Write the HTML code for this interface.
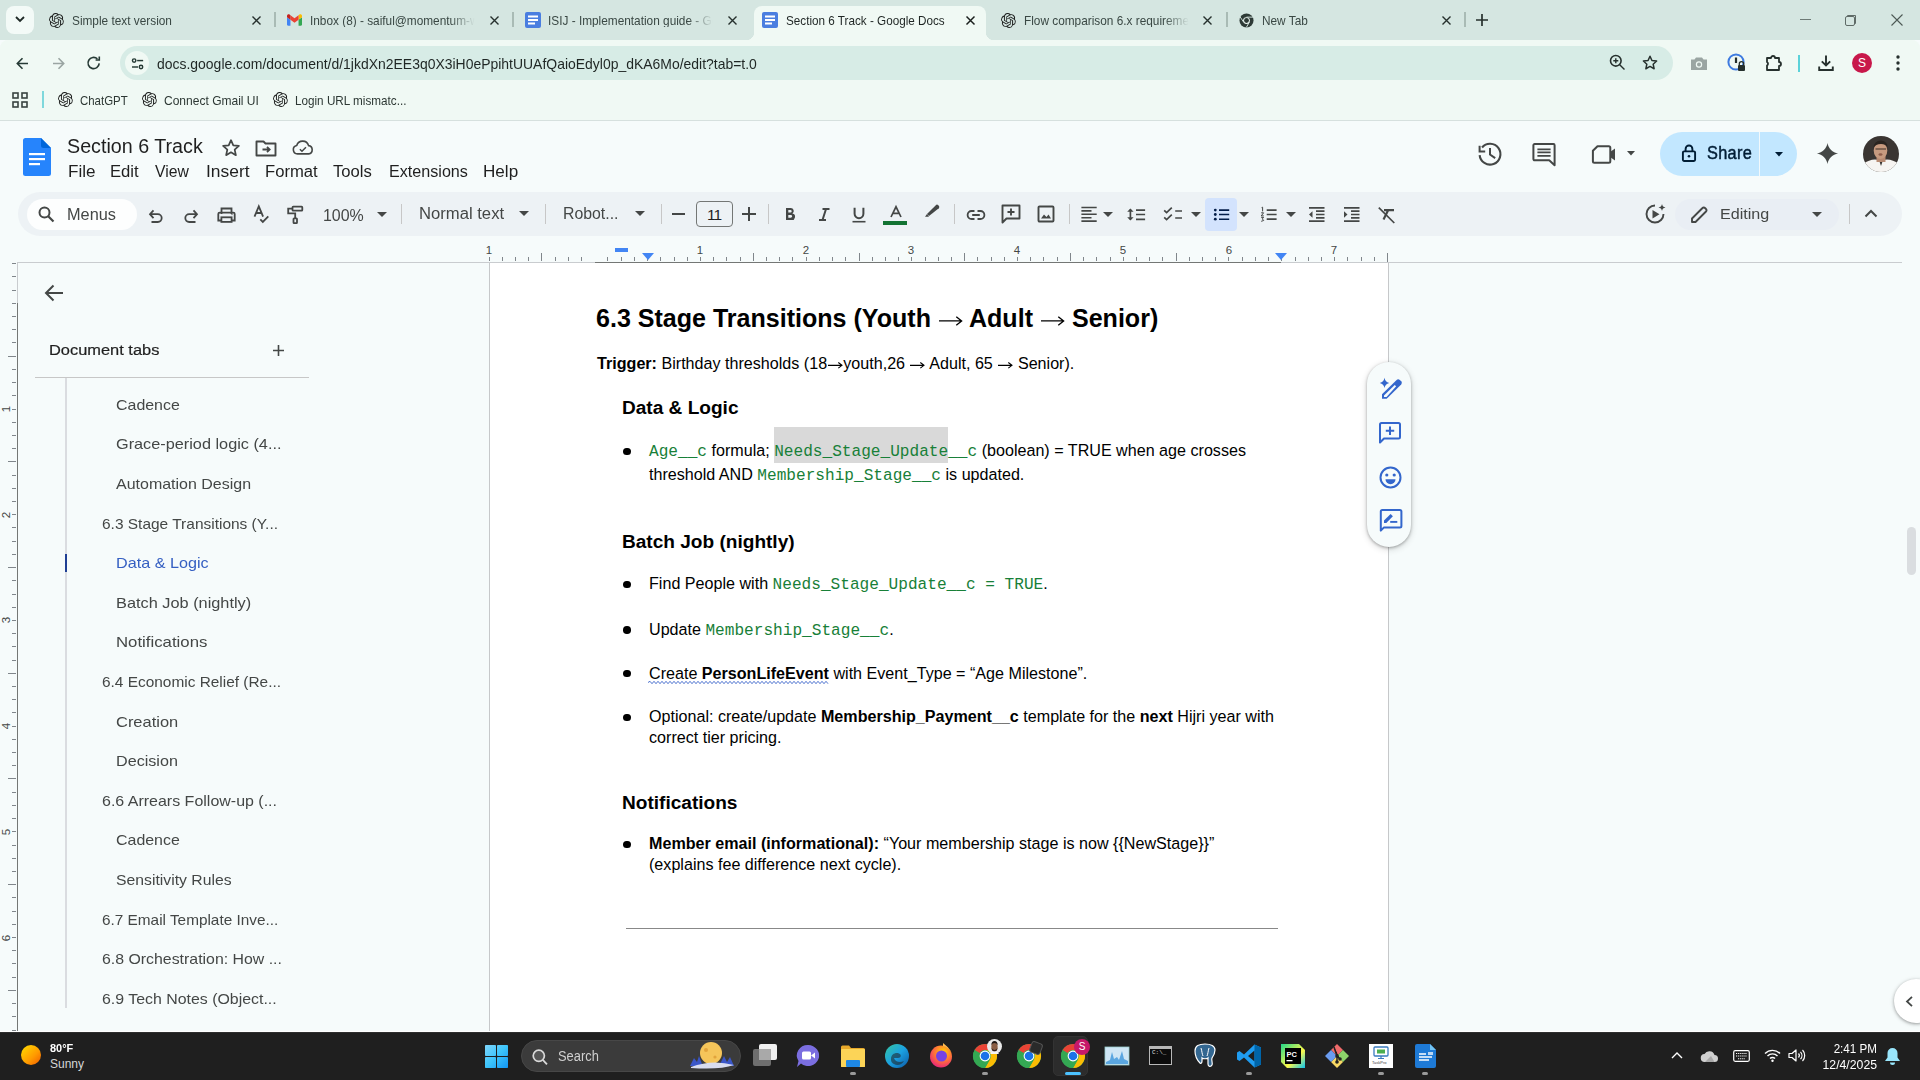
<!DOCTYPE html>
<html><head><meta charset="utf-8">
<style>
*{box-sizing:border-box;margin:0;padding:0}
html,body{width:1920px;height:1080px;overflow:hidden;background:#f6fbfb;font-family:"Liberation Sans",sans-serif;position:relative}
.a{position:absolute}
.t{position:absolute;white-space:nowrap;line-height:1}
svg{position:absolute;overflow:visible}
/* chrome */
#tabstrip{left:0;top:0;width:1920px;height:40px;background:#d5e6e1}
#toolbar{left:0;top:40px;width:1920px;height:80px;background:#f0f9f4;border-radius:8px 8px 0 0}
.tabtxt{font-size:13px;color:#3a4844;top:14px}
.close{font-size:14px;color:#26302d}
.sep{width:2px;height:18px;background:#a9bbb5;top:11px}
#docbg{left:0;top:121px;width:1920px;height:911px;background:#f6fbfb}
.menu{font-size:15.8px;color:#1f1f1f;top:163.5px;transform-origin:0 0}
.tbi{stroke:#444746;fill:none;stroke-width:2}
.tsep{width:1px;height:20px;background:#c7c7c7;top:204px}
.side{font-size:14.3px;color:#444746;transform-origin:0 0}
.doc{color:#000;font-size:15.5px}
.code{font-family:"Liberation Mono",monospace;color:#188038}
#taskbar{left:0;top:1032px;width:1920px;height:48px;background:#1f1f1f;border-top:1px solid #2e2e2e}
</style></head><body>
<svg width="0" height="0" style="position:absolute"><defs><path id="oai" fill="#1d1f1e" d="M22.2819 9.8211a5.9847 5.9847 0 0 0-.5157-4.9108 6.0462 6.0462 0 0 0-6.5098-2.9A6.0651 6.0651 0 0 0 4.9807 4.1818a5.9847 5.9847 0 0 0-3.9977 2.9 6.0462 6.0462 0 0 0 .7427 7.0966 5.98 5.98 0 0 0 .511 4.9107 6.051 6.051 0 0 0 6.5146 2.9001A5.9847 5.9847 0 0 0 13.2599 24a6.0557 6.0557 0 0 0 5.7718-4.2058 5.9894 5.9894 0 0 0 3.9977-2.9001 6.0557 6.0557 0 0 0-.7475-7.0729zm-9.022 12.6081a4.4755 4.4755 0 0 1-2.8764-1.0408l.1419-.0804 4.7783-2.7582a.7948.7948 0 0 0 .3927-.6813v-6.7369l2.02 1.1686a.071.071 0 0 1 .038.052v5.5826a4.504 4.504 0 0 1-4.4945 4.4944zm-9.6607-4.1254a4.4708 4.4708 0 0 1-.5346-3.0137l.142.0852 4.783 2.7582a.7712.7712 0 0 0 .7806 0l5.8428-3.3685v2.3324a.0804.0804 0 0 1-.0332.0615L9.74 19.9502a4.4992 4.4992 0 0 1-6.1408-1.6464zM2.3408 7.8956a4.485 4.485 0 0 1 2.3655-1.9728V11.6a.7664.7664 0 0 0 .3879.6765l5.8144 3.3543-2.0201 1.1685a.0757.0757 0 0 1-.071 0l-4.8303-2.7865A4.504 4.504 0 0 1 2.3408 7.872zm16.5963 3.8558L13.1038 8.364 15.1192 7.2a.0757.0757 0 0 1 .071 0l4.8303 2.7913a4.4944 4.4944 0 0 1-.6765 8.1042v-5.6772a.79.79 0 0 0-.407-.667zm2.0107-3.0231l-.142-.0852-4.7735-2.7818a.7759.7759 0 0 0-.7854 0L9.409 9.2297V6.8974a.0662.0662 0 0 1 .0284-.0615l4.8303-2.7866a4.4992 4.4992 0 0 1 6.6802 4.66zM8.3065 12.863l-2.02-1.1638a.0804.0804 0 0 1-.038-.0567V6.0742a4.4992 4.4992 0 0 1 7.3757-3.4537l-.142.0805L8.704 5.459a.7948.7948 0 0 0-.3927.6813zm1.0976-2.3654l2.602-1.4998 2.6069 1.4998v2.9994l-2.5974 1.4997-2.6067-1.4997Z"/></defs></svg>
<div id="tabstrip" class="a"></div>
<div id="toolbar" class="a"></div>
<!-- tab dropdown -->
<div class="a" style="left:6px;top:6px;width:28px;height:28px;border-radius:8px;background:#f3faf7"></div>
<svg style="left:14px;top:15px" width="12" height="8"><path d="M2 2 L6 6 L10 2" stroke="#1f2a27" stroke-width="1.8" fill="none"/></svg>
<!-- active tab -->
<div class="a" style="left:754px;top:6px;width:232px;height:34px;background:#f0f9f4;border-radius:8px 8px 0 0"></div>
<div class="a" style="left:746px;top:32px;width:8px;height:8px;background:radial-gradient(circle at 0 0,#d5e6e1 8px,#f0f9f4 8.5px)"></div>
<div class="a" style="left:986px;top:32px;width:8px;height:8px;background:radial-gradient(circle at 8px 0,#d5e6e1 8px,#f0f9f4 8.5px)"></div>
<!-- tab icons -->
<svg style="left:49px;top:13px" width="15" height="15" viewBox="0 0 24 24"><use href="#oai"/></svg>
<svg style="left:287px;top:14px" width="15" height="12" viewBox="0 0 20 15"><path d="M1.4 15h3.2V7.2L0 3.8v9.8C0 14.4.6 15 1.4 15z" fill="#4285f4"/><path d="M15.4 15h3.2c.8 0 1.4-.6 1.4-1.4V3.8l-4.6 3.4z" fill="#34a853"/><path d="M15.4 1.3v5.9L20 3.8V2c0-1.7-2-2.7-3.4-1.7z" fill="#fbbc04"/><path d="M4.6 7.2V1.3L10 5.3l5.4-4v5.9L10 11.2z" fill="#ea4335"/><path d="M0 2v1.8l4.6 3.4V1.3L3.4.3C2 -.7 0 .3 0 2z" fill="#c5221f"/></svg>
<svg style="left:525px;top:12px" width="16" height="16" viewBox="0 0 16 16"><rect x="0" y="0" width="16" height="16" rx="2" fill="#4a7ee0"/><rect x="3" y="3.5" width="10" height="2" fill="#fff"/><rect x="3" y="7" width="10" height="2" fill="#fff"/><rect x="3" y="10.5" width="7" height="2" fill="#fff"/></svg>
<svg style="left:762px;top:12px" width="16" height="16" viewBox="0 0 16 16"><rect x="0" y="0" width="16" height="16" rx="2" fill="#4a7ee0"/><rect x="3" y="3.5" width="10" height="2" fill="#fff"/><rect x="3" y="7" width="10" height="2" fill="#fff"/><rect x="3" y="10.5" width="7" height="2" fill="#fff"/></svg>
<svg style="left:1001px;top:13px" width="15" height="15" viewBox="0 0 24 24"><use href="#oai"/></svg>
<svg style="left:1239px;top:13px" width="15" height="15" viewBox="0 0 16 16"><circle cx="8" cy="8" r="7.5" fill="#2e3a36"/><circle cx="8" cy="8" r="3.6" fill="#f0f9f4"/><circle cx="8" cy="8" r="2.6" fill="#2e3a36"/><path d="M8 4.4H15M5 9.8L1.2 4.2M11 9.8L7.8 15.4" stroke="#d5e6e1" stroke-width="1"/></svg>
<!-- tab texts -->
<div class="t tabtxt" style="left:72px;transform:scaleX(.91);transform-origin:0 0">Simple text version</div>
<div class="t tabtxt" style="left:310px;width:181px;overflow:hidden;transform:scaleX(.91);transform-origin:0 0;-webkit-mask-image:linear-gradient(90deg,#000 85%,transparent)">Inbox (8) - saiful@momentum-w</div>
<div class="t tabtxt" style="left:548px;width:181px;overflow:hidden;transform:scaleX(.91);transform-origin:0 0;-webkit-mask-image:linear-gradient(90deg,#000 85%,transparent)">ISIJ - Implementation guide - Go</div>
<div class="t tabtxt" style="left:786px;color:#1f2624;transform:scaleX(.9);transform-origin:0 0">Section 6 Track - Google Docs</div>
<div class="t tabtxt" style="left:1024px;width:181px;overflow:hidden;transform:scaleX(.91);transform-origin:0 0;-webkit-mask-image:linear-gradient(90deg,#000 85%,transparent)">Flow comparison 6.x requirements</div>
<div class="t tabtxt" style="left:1262px;transform:scaleX(.91);transform-origin:0 0">New Tab</div>
<!-- close x -->
<svg style="left:252px;top:16px" width="9" height="9"><path d="M.5 .5L8.5 8.5M8.5 .5L.5 8.5" stroke="#26302d" stroke-width="1.4"/></svg>
<svg style="left:490px;top:16px" width="9" height="9"><path d="M.5 .5L8.5 8.5M8.5 .5L.5 8.5" stroke="#26302d" stroke-width="1.4"/></svg>
<svg style="left:728px;top:16px" width="9" height="9"><path d="M.5 .5L8.5 8.5M8.5 .5L.5 8.5" stroke="#26302d" stroke-width="1.4"/></svg>
<svg style="left:966px;top:16px" width="9" height="9"><path d="M.5 .5L8.5 8.5M8.5 .5L.5 8.5" stroke="#1a1f1d" stroke-width="1.45"/></svg>
<svg style="left:1203px;top:16px" width="9" height="9"><path d="M.5 .5L8.5 8.5M8.5 .5L.5 8.5" stroke="#26302d" stroke-width="1.4"/></svg>
<svg style="left:1442px;top:16px" width="9" height="9"><path d="M.5 .5L8.5 8.5M8.5 .5L.5 8.5" stroke="#26302d" stroke-width="1.4"/></svg>
<div class="a sep" style="left:274px;width:1.5px;top:12px;height:15px"></div>
<div class="a sep" style="left:512px;width:1.5px;top:12px;height:15px"></div>
<div class="a sep" style="left:1226px;width:1.5px;top:12px;height:15px"></div>
<div class="a sep" style="left:1464px;width:1.5px;top:12px;height:15px"></div>
<svg style="left:1476px;top:14px" width="12" height="12"><path d="M6 0V12M0 6H12" stroke="#26302d" stroke-width="1.7"/></svg>
<!-- window controls -->
<div class="a" style="left:1800px;top:19px;width:11px;height:1px;background:#6d7a76"></div>
<svg style="left:1845px;top:14px" width="12" height="12"><path d="M2.5 2.5V1.5H10.5V9.5H9.5" stroke="#5f6b67" fill="none" stroke-width="1"/><rect x=".5" y="2.5" width="9" height="9" rx="1.5" stroke="#5f6b67" fill="none" stroke-width="1"/></svg>
<svg style="left:1891px;top:14px" width="12" height="12"><path d="M.5 .5L11.5 11.5M11.5 .5L.5 11.5" stroke="#4d5955" stroke-width="1.1"/></svg>
<!-- toolbar -->
<svg style="left:16px;top:56.5px" width="13" height="13" viewBox="0 0 13 13"><path d="M12 6.5H1.5M6.5 1.2L1.3 6.5 6.5 11.8" stroke="#263a35" stroke-width="1.6" fill="none"/></svg>
<svg style="left:51.5px;top:56.5px" width="13" height="13" viewBox="0 0 13 13"><path d="M1 6.5H11.5M6.5 1.2L11.7 6.5 6.5 11.8" stroke="#9aa5a2" stroke-width="1.6" fill="none"/></svg>
<svg style="left:87px;top:56px" width="14" height="14" viewBox="0 0 14 14"><path d="M12.2 7.4A5.6 5.6 0 1 1 10.4 2.9" stroke="#263a35" stroke-width="1.6" fill="none"/><path d="M8.6 2.8H12.3V-.6" stroke="#263a35" stroke-width="1.6" fill="none" transform="translate(0 1.2)"/></svg>
<div class="a" style="left:120px;top:46px;width:1553px;height:34px;border-radius:17px;background:#d7ece6"></div>
<div class="a" style="left:125px;top:51px;width:24px;height:24px;border-radius:12px;background:#f0f9f4"></div>
<svg style="left:130.5px;top:57.5px" width="14" height="12" viewBox="0 0 16 14"><g stroke="#263a35" stroke-width="1.7" fill="none"><circle cx="3.5" cy="3" r="2"/><path d="M7 3H14"/><circle cx="11.5" cy="10.5" r="2"/><path d="M1 10.5H8"/></g></svg>
<div class="t" style="left:157px;top:56px;font-size:15px;color:#1f2624;transform:scaleX(.93);transform-origin:0 0">docs.google.com/document/d/1jkdXn2EE3q0X3iH0ePpihtUUAfQaioEdyl0p_dKA6Mo/edit?tab=t.0</div>
<svg style="left:1609px;top:54px" width="18" height="18"><circle cx="6.8" cy="6.8" r="5.3" stroke="#26302d" stroke-width="1.6" fill="none"/><path d="M10.7 10.7L15.5 15.5M4.3 6.8H9.3M6.8 4.3V9.3" stroke="#26302d" stroke-width="1.4"/></svg>
<svg style="left:1641px;top:54px" width="18" height="18" viewBox="0 0 24 24"><path d="M12 3l2.6 5.7 6.2.7-4.6 4.2 1.3 6.1L12 16.6l-5.5 3.1 1.3-6.1-4.6-4.2 6.2-.7z" stroke="#26302d" stroke-width="2" fill="none" stroke-linejoin="round"/></svg>
<svg style="left:1690px;top:55px" width="18" height="16" viewBox="0 0 18 16"><path d="M1 4.5h3.5L6 2.5h6l1.5 2H17V15H1z" fill="#9aa5a2"/><circle cx="9" cy="9.5" r="3.2" fill="#f0f9f4"/><circle cx="9" cy="9.5" r="2" fill="#9aa5a2"/></svg>
<svg style="left:1727px;top:53px" width="20" height="20" viewBox="0 0 20 20"><circle cx="9" cy="9" r="7.6" fill="none" stroke="#3e7be0" stroke-width="2"/><path d="M9 4.5V10" stroke="#26302d" stroke-width="2.2"/><rect x="11" y="12" width="7" height="6" rx="1" fill="#26302d"/><path d="M12.3 12V10.8a2.2 2.2 0 0 1 4.4 0V12" stroke="#26302d" stroke-width="1.3" fill="none"/></svg>
<svg style="left:1764px;top:53px" width="20" height="20" viewBox="0 0 20 20"><path d="M3 5h4a2 2 0 0 1 4 0h4v4a2 2 0 0 1 0 4v4H3v-4.5a2 2 0 0 0 0-3.5z" stroke="#26302d" stroke-width="1.8" fill="none" stroke-linejoin="round"/></svg>
<div class="a" style="left:1798px;top:55px;width:2px;height:17px;background:#5bd2d9"></div>
<svg style="left:1816px;top:53px" width="20" height="20"><path d="M10 2.5V12.5M5.8 8.3L10 12.5l4.2-4.2M3.2 13.5V17H16.8V13.5" stroke="#26302d" stroke-width="1.9" fill="none"/></svg>
<div class="a" style="left:1852px;top:53px;width:20px;height:20px;border-radius:10px;background:#c8184a;color:#fff;font-size:12px;line-height:20px;text-align:center">S</div>
<svg style="left:1895px;top:54px" width="6" height="18"><circle cx="3" cy="3" r="1.7" fill="#26302d"/><circle cx="3" cy="9" r="1.7" fill="#26302d"/><circle cx="3" cy="15" r="1.7" fill="#26302d"/></svg>
<!-- bookmarks -->
<svg style="left:12px;top:92px" width="16" height="16"><g fill="none" stroke="#3a4441" stroke-width="1.6"><rect x="1" y="1" width="5" height="5"/><rect x="10" y="1" width="5" height="5"/><rect x="1" y="10" width="5" height="5"/><rect x="10" y="10" width="5" height="5"/></g></svg>
<div class="a" style="left:42px;top:91px;width:2px;height:17px;background:#7fd8dc"></div>
<svg style="left:58px;top:92px" width="15" height="15" viewBox="0 0 24 24"><use href="#oai"/></svg>
<svg style="left:142px;top:92px" width="15" height="15" viewBox="0 0 24 24"><use href="#oai"/></svg>
<svg style="left:273px;top:92px" width="15" height="15" viewBox="0 0 24 24"><use href="#oai"/></svg>
<div class="t" style="left:80px;top:94px;font-size:13px;color:#2d3834;transform:scaleX(.88);transform-origin:0 0">ChatGPT</div>
<div class="t" style="left:164px;top:94px;font-size:13px;color:#2d3834;transform:scaleX(.925);transform-origin:0 0">Connect Gmail UI</div>
<div class="t" style="left:295px;top:94px;font-size:13px;color:#2d3834;transform:scaleX(.9);transform-origin:0 0">Login URL mismatc...</div>
<div class="a" style="left:0;top:120px;width:1920px;height:1px;background:#d6e0de"></div>
<div id="docbg" class="a"></div>

<!-- DOCS HEADER -->
<svg style="left:23px;top:138px" width="28" height="38" viewBox="0 0 28 38"><path d="M2.5 0H18L28 10V35.5A2.5 2.5 0 0 1 25.5 38H2.5A2.5 2.5 0 0 1 0 35.5V2.5A2.5 2.5 0 0 1 2.5 0z" fill="#2684fc"/><path d="M18 0L28 10H20.5A2.5 2.5 0 0 1 18 7.5z" fill="#0066da"/><rect x="6" y="15" width="16" height="2.2" fill="#fff"/><rect x="6" y="20" width="16" height="2.2" fill="#fff"/><rect x="6" y="25" width="11" height="2.2" fill="#fff"/></svg>
<div class="t" style="left:66.5px;top:137px;font-size:19.5px;color:#1f1f1f;transform:scaleX(1.01);transform-origin:0 0">Section 6 Track</div>
<svg style="left:220px;top:137px" width="22" height="22" viewBox="0 0 24 24"><path d="M12 3.5l2.5 5.6 6.1.6-4.6 4.1 1.3 6-5.3-3.1-5.3 3.1 1.3-6-4.6-4.1 6.1-.6z" stroke="#444746" stroke-width="1.9" fill="none" stroke-linejoin="round"/></svg>
<svg style="left:255px;top:138px" width="22" height="20" viewBox="0 0 22 20"><path d="M1.5 3.5V17.5H20.5V5.5H10.5L8.5 3.5z" stroke="#444746" stroke-width="1.9" fill="none" stroke-linejoin="round"/><path d="M7.5 11.5H14.5M12 8.8L14.7 11.5 12 14.2" stroke="#444746" stroke-width="1.8" fill="none"/></svg>
<svg style="left:292px;top:138.5px" width="22" height="17" viewBox="0 0 26 20"><path d="M6.5 17.5A5 5 0 0 1 5.6 7.6 7.3 7.3 0 0 1 19.6 7.8 4.9 4.9 0 0 1 19.7 17.5z" stroke="#444746" stroke-width="1.9" fill="none" stroke-linejoin="round"/><path d="M9.3 12L11.8 14.4 16.5 9.7" stroke="#444746" stroke-width="1.8" fill="none"/></svg>
<div class="t menu" style="left:67.5px;transform:scaleX(1.083)">File</div>
<div class="t menu" style="left:109.5px;transform:scaleX(1.054)">Edit</div>
<div class="t menu" style="left:154.5px;transform:scaleX(0.997)">View</div>
<div class="t menu" style="left:205.5px;transform:scaleX(1.102)">Insert</div>
<div class="t menu" style="left:264.5px;transform:scaleX(1.054)">Format</div>
<div class="t menu" style="left:332.5px;transform:scaleX(1.054)">Tools</div>
<div class="t menu" style="left:388.5px;transform:scaleX(1.021)">Extensions</div>
<div class="t menu" style="left:482.5px;transform:scaleX(1.083)">Help</div>
<!-- right header -->
<svg style="left:1477px;top:141px" width="26" height="26" viewBox="0 0 26 26"><path d="M5.03 6.51A10.4 10.4 0 1 1 2.64 14.1" stroke="#444746" stroke-width="2.1" fill="none"/><path d="M2.6 4.8V10.4H8.2" stroke="#444746" stroke-width="2" fill="none"/><path d="M13 7V13.5L18.2 17.1" stroke="#444746" stroke-width="2" fill="none"/></svg>
<svg style="left:1532px;top:143px" width="24" height="24" viewBox="0 0 24 24"><path d="M2.6 1H21.4A1.2 1.2 0 0 1 22.6 2.2V22.2L17.2 17.3H2.6A1.2 1.2 0 0 1 1.4 16.1V2.2A1.2 1.2 0 0 1 2.6 1z" stroke="#444746" stroke-width="2" fill="none" stroke-linejoin="round"/><path d="M5.4 6.3H18.6M5.4 9.4H18.6M5.4 12.8H18.6" stroke="#444746" stroke-width="1.7"/></svg>
<svg style="left:1592px;top:145px" width="24" height="19" viewBox="0 0 24 19"><path d="M5.5 1.2H16.8A1.5 1.5 0 0 1 18.3 2.7V16.3A1.5 1.5 0 0 1 16.8 17.8H2.4A1.5 1.5 0 0 1 .9 16.3V5.8z" stroke="#444746" stroke-width="2" fill="none" stroke-linejoin="round"/><path d="M18 7L23 3.6V15.4L18 12z" fill="#444746"/></svg>
<svg style="left:1627px;top:151px" width="8" height="4.5"><path d="M0 0H8L4 4.5z" fill="#444746"/></svg>
<div class="a" style="left:1660px;top:132px;width:137px;height:44px;border-radius:22px;background:#c2e7ff"></div>
<div class="a" style="left:1759px;top:132px;width:1px;height:44px;background:#f2f9fc"></div>
<svg style="left:1681px;top:144px" width="16" height="18" viewBox="0 0 16 18"><rect x="1.9" y="7.4" width="12.2" height="9.6" rx="1.2" stroke="#001d35" stroke-width="1.9" fill="none"/><path d="M4.6 7.4V4.9a3.4 3.4 0 0 1 6.8 0V7.4" stroke="#001d35" stroke-width="1.9" fill="none"/><circle cx="8" cy="12.2" r="1.3" fill="#001d35"/></svg>
<div class="t" style="left:1707px;top:145.3px;font-size:17.6px;color:#001d35;-webkit-text-stroke:.45px #001d35;transform:scaleX(.93);transform-origin:0 0;letter-spacing:.3px">Share</div>
<svg style="left:1775px;top:151.5px" width="8" height="4.5"><path d="M0 0H8L4 4.5z" fill="#001d35"/></svg>
<svg style="left:1816px;top:142px" width="23" height="23" viewBox="0 0 24 24"><path d="M12 1C12.9 6.6 17.4 11.1 23 12 17.4 12.9 12.9 17.4 12 23 11.1 17.4 6.6 12.9 1 12 6.6 11.1 11.1 6.6 12 1z" fill="#444746"/></svg>
<svg style="left:1863px;top:136px" width="36" height="36" viewBox="0 0 36 36"><defs><clipPath id="avc"><circle cx="18" cy="18" r="18"/></clipPath></defs><g clip-path="url(#avc)"><rect width="36" height="36" fill="#3a3532"/><path d="M0 28Q8 22 16 24L18 30 20 24Q28 22 36 28V36H0z" fill="#f6f4f1"/><rect x="13.5" y="18" width="9" height="8" fill="#b78a72"/><ellipse cx="17.5" cy="14.5" rx="6.8" ry="8.5" fill="#c79a7f"/><path d="M10.5 12Q11 4.5 18 4.5 25 5 24.5 12 23 8 18 8 12.5 8 10.5 12z" fill="#2a2420"/><path d="M12.5 13H23" stroke="#3d2e26" stroke-width="1.2"/><ellipse cx="17.5" cy="18.5" rx="2" ry="1.3" fill="#8f5d4a"/></g></svg>
<!-- TOOLBAR PILL -->
<div class="a" style="left:18px;top:192px;width:1884px;height:44px;border-radius:22px;background:#edf2f5"></div>
<div class="a" style="left:27px;top:199px;width:110px;height:31px;border-radius:16px;background:#fdfefe"></div>
<svg style="left:38px;top:206px" width="17" height="17" viewBox="0 0 17 17"><circle cx="6.5" cy="6.5" r="5" stroke="#444746" stroke-width="2" fill="none"/><path d="M10.2 10.2L15.5 15.5" stroke="#444746" stroke-width="2.2"/></svg>
<div class="t" style="left:66.5px;top:206.5px;font-size:16px;color:#444746;transform:scaleX(1.02);transform-origin:0 0">Menus</div>
<svg style="left:140px;top:198px" width="170" height="34" viewBox="0 0 170 34"><g stroke="#444746" stroke-width="1.8" fill="none">
<path d="M13.5 12.3L10 16.2 13.5 20.1M10.5 16.2H17.8A3.9 3.9 0 0 1 17.8 24H11.5"/>
<path d="M53.5 12.3L57 16.2 53.5 20.1M56.5 16.2H49.2A3.9 3.9 0 0 0 49.2 24H55.5"/>
<path d="M81.5 16V10.5H91.5V16M81 22.5H78.3V16A1.4 1.4 0 0 1 79.7 14.6H93.3A1.4 1.4 0 0 1 94.7 16V22.5H92"/>
<rect x="81.4" y="19.3" width="10.2" height="4.6"/>
<path d="M114.5 18.6L118.8 8.4 123.1 18.6M116 15H121.6"/>
<path d="M120.3 21.4L122.8 23.9 128.3 18.3"/>
<rect x="152.5" y="8.7" width="9.8" height="3.9" rx=".7"/>
<path d="M152.5 10.7H148.2V15.3H155.2V20.5"/>
<rect x="153.5" y="20.3" width="3.5" height="4.8" rx=".6"/>
</g><circle cx="92" cy="16.6" r=".6" fill="#444746"/></svg>
<div class="t" style="left:323px;top:207.3px;font-size:16.3px;color:#444746;transform:scaleX(.98);transform-origin:0 0">100%</div>
<svg style="left:377px;top:212px" width="10" height="5"><path d="M0 0H10L5 5z" fill="#444746"/></svg>
<div class="a tsep" style="left:401px"></div>
<div class="t" style="left:418.5px;top:205.5px;font-size:16px;color:#444746;transform:scaleX(1.04);transform-origin:0 0">Normal text</div>
<svg style="left:519px;top:211px" width="10" height="5"><path d="M0 0H10L5 5z" fill="#444746"/></svg>
<div class="a tsep" style="left:545px"></div>
<div class="t" style="left:562.5px;top:205.5px;font-size:16px;color:#444746;transform:scaleX(.99);transform-origin:0 0">Robot...</div>
<svg style="left:635px;top:211px" width="10" height="5"><path d="M0 0H10L5 5z" fill="#444746"/></svg>
<div class="a tsep" style="left:661px"></div>
<div class="a" style="left:672px;top:213px;width:13px;height:2px;background:#444746"></div>
<div class="a" style="left:696px;top:201px;width:37px;height:26px;border:1px solid #747775;border-radius:4px"></div>
<div class="t" style="left:707px;top:207px;font-size:15.5px;color:#1f1f1f;letter-spacing:-1px">11</div>
<svg style="left:742px;top:207px" width="14" height="14"><path d="M7 0V14M0 7H14" stroke="#444746" stroke-width="2"/></svg>
<div class="a tsep" style="left:768px"></div>
<svg style="left:785px;top:208px" width="10" height="12" viewBox="0 0 10 12"><path d="M1 0H5.6A3 3 0 0 1 7.4 5.5 3.2 3.2 0 0 1 6 12H1z" fill="#444746"/><path d="M3.3 2H5.4A1.2 1.2 0 0 1 5.4 4.6H3.3zM3.3 6.9H5.7A1.4 1.4 0 0 1 5.7 9.8H3.3z" fill="#edf2f5"/></svg>
<svg style="left:818px;top:208px" width="12" height="13" viewBox="0 0 12 13"><path d="M4.5 1H11.5M1 12H8M8 1L4.5 12" stroke="#444746" stroke-width="2" fill="none"/></svg>
<svg style="left:852px;top:207px" width="14" height="16" viewBox="0 0 14 16"><path d="M2.6 .8V6.8A4.4 4.4 0 0 0 11.4 6.8V.8" stroke="#444746" stroke-width="2" fill="none"/><path d="M.5 14.7H13.5" stroke="#444746" stroke-width="1.6"/></svg>
<svg style="left:890px;top:206px" width="12" height="12" viewBox="0 0 12 12"><path d="M1 11L6 .8 11 11M2.8 7.4H9.2" stroke="#444746" stroke-width="1.7" fill="none"/></svg>
<div class="a" style="left:883px;top:221px;width:24px;height:4px;background:#137333"></div>
<svg style="left:924px;top:203px" width="17" height="15" viewBox="0 0 17 15"><path d="M5 13L3 11 11.8 2.2A1.7 1.7 0 0 1 14.2 2.2L14.8 2.8A1.7 1.7 0 0 1 14.8 5.2z" fill="#444746"/><path d="M3 11L1 13.8H5z" fill="#444746"/></svg>
<div class="a tsep" style="left:954px"></div>
<svg style="left:967px;top:210px" width="18" height="10" viewBox="0 0 18 10"><path d="M7.5 1H4.6A4 4 0 0 0 4.6 9H7.5M10.5 1H13.4A4 4 0 0 1 13.4 9H10.5M5.2 5H12.8" stroke="#444746" stroke-width="1.8" fill="none"/></svg>
<svg style="left:1001px;top:204px" width="20" height="20" viewBox="0 0 20 20"><path d="M1.5 1.5H18.5V14.5H5.5L1.5 18.5z" stroke="#444746" stroke-width="1.9" fill="none" stroke-linejoin="round"/><path d="M10 4.5V11.5M6.5 8H13.5" stroke="#444746" stroke-width="1.9"/></svg>
<svg style="left:1037px;top:205px" width="18" height="18" viewBox="0 0 18 18"><rect x="1.5" y="1.5" width="15" height="15" rx="1" stroke="#444746" stroke-width="1.9" fill="none"/><path d="M4 13.5L7 9.5 9.5 12 11.5 9.5 14 13.5z" fill="#444746"/></svg>
<div class="a tsep" style="left:1069px"></div>
<svg style="left:1081px;top:206px" width="17" height="17" viewBox="0 0 17 17"><path d="M.4 1.5H15.7M.4 4.9H10.5M.4 8.3H15.7M.4 11.7H10.5M.4 15.1H15.7" stroke="#444746" stroke-width="1.6"/></svg>
<svg style="left:1103px;top:212px" width="10" height="5"><path d="M0 0H10L5 5z" fill="#444746"/></svg>
<svg style="left:1126px;top:207px" width="21" height="16" viewBox="0 0 21 16"><path d="M4.4 2.5V12.5" stroke="#444746" stroke-width="1.7"/><path d="M1.2 4.8L4.4 1.5 7.6 4.8zM1.2 10.2L4.4 13.6 7.6 10.2z" fill="#444746"/><path d="M10 3.1H19.1M10 7.5H19.1M10 12.4H19.1" stroke="#444746" stroke-width="1.7"/></svg>
<svg style="left:1163px;top:206px" width="20" height="16" viewBox="0 0 20 16"><path d="M1.2 4.3L3.6 6.6 8.8 1.6M1.2 11.3L3.6 13.6 8.8 8.6" stroke="#444746" stroke-width="1.7" fill="none"/><path d="M12.2 5H19M12.2 12H19" stroke="#444746" stroke-width="1.7"/></svg>
<svg style="left:1191px;top:212px" width="10" height="5"><path d="M0 0H10L5 5z" fill="#444746"/></svg>
<div class="a" style="left:1205px;top:198px;width:32px;height:33px;border-radius:4px;background:#d3e3fd"></div>
<svg style="left:1212px;top:207px" width="18" height="15" viewBox="0 0 18 15"><circle cx="3.3" cy="3.1" r="1.4" fill="#041e49"/><circle cx="3.3" cy="7.5" r="1.4" fill="#041e49"/><circle cx="3.3" cy="12.2" r="1.4" fill="#041e49"/><path d="M7 3.1H17.2M7 7.5H17.2M7 12.2H17.2" stroke="#041e49" stroke-width="1.6"/></svg>
<svg style="left:1239px;top:212px" width="10" height="5"><path d="M0 0H10L5 5z" fill="#444746"/></svg>
<svg style="left:1259px;top:207px" width="20" height="16" viewBox="0 0 20 16"><path d="M2.6 .6L3.6 .2V4.4M2.2 5.8H4.6L2.2 8.9H4.8M2.2 10.4H4.6L3.3 11.9 4.7 13.5 2.2 14.3" stroke="#444746" stroke-width="1" fill="none"/><path d="M7.7 3.1H17.6M7.7 7.5H17.6M7.7 12.2H17.6" stroke="#444746" stroke-width="1.7"/></svg>
<svg style="left:1286px;top:212px" width="10" height="5"><path d="M0 0H10L5 5z" fill="#444746"/></svg>
<svg style="left:1309px;top:207px" width="16" height="15" viewBox="0 0 16 15"><path d="M0 .8H15.5M7 4.2H15.5M7 7.5H15.5M7 10.8H15.5M0 14.2H15.5" stroke="#444746" stroke-width="1.7"/><path d="M3.5 4.3L0 7.5 3.5 10.7z" fill="#444746"/></svg>
<svg style="left:1344px;top:207px" width="16" height="15" viewBox="0 0 16 15"><path d="M0 .8H15.5M7 4.2H15.5M7 7.5H15.5M7 10.8H15.5M0 14.2H15.5" stroke="#444746" stroke-width="1.7"/><path d="M0 4.3L3.5 7.5 0 10.7z" fill="#444746"/></svg>
<svg style="left:1377px;top:206px" width="19" height="19" viewBox="0 0 19 19"><path d="M7 4.2H17M11 4.5L6.5 13.5" stroke="#444746" stroke-width="2.2" fill="none"/><path d="M1.8 1.6L17.3 17" stroke="#444746" stroke-width="1.7" fill="none"/></svg>
<svg style="left:1644px;top:203px" width="23" height="23" viewBox="0 0 23 23"><path d="M19.5 11A8.5 8.5 0 1 1 11 2.5" stroke="#444746" stroke-width="1.9" fill="none"/><path d="M8.5 7V15.5L15.5 11.2z" fill="#444746"/><path d="M18 1C18.3 3 19.5 4.2 21.5 4.5 19.5 4.8 18.3 6 18 8 17.7 6 16.5 4.8 14.5 4.5 16.5 4.2 17.7 3 18 1z" fill="#444746"/></svg>
<div class="a" style="left:1675px;top:199px;width:164px;height:31px;border-radius:16px;background:#e9eef4"></div>
<svg style="left:1690px;top:205px" width="19" height="19" viewBox="0 0 19 19"><path d="M2 17V13.5L12.5 3A1.7 1.7 0 0 1 15 3L16 4A1.7 1.7 0 0 1 16 6.5L5.5 17z" stroke="#444746" stroke-width="1.9" fill="none" stroke-linejoin="round"/></svg>
<div class="t" style="left:1720px;top:206px;font-size:15.5px;color:#444746;transform:scaleX(1.04);transform-origin:0 0">Editing</div>
<svg style="left:1812px;top:212px" width="10" height="5"><path d="M0 0H10L5 5z" fill="#444746"/></svg>
<div class="a tsep" style="left:1849px"></div>
<svg style="left:1864px;top:209px" width="14" height="9"><path d="M1.5 7.5L7 2 12.5 7.5" stroke="#444746" stroke-width="2" fill="none"/></svg>
<div class="a" style="left:17px;top:262px;width:1885px;height:1px;background:#c9cccf"></div>
<div class="a" style="left:595px;top:262px;width:686px;height:1px;background:#747775"></div>
<div class="a" style="left:501.7px;top:257px;width:1px;height:4px;background:#80868b"></div>
<div class="a" style="left:514.9px;top:257px;width:1px;height:4px;background:#80868b"></div>
<div class="a" style="left:528.1px;top:257px;width:1px;height:4px;background:#80868b"></div>
<div class="a" style="left:541.4px;top:253px;width:1px;height:8px;background:#80868b"></div>
<div class="a" style="left:554.6px;top:257px;width:1px;height:4px;background:#80868b"></div>
<div class="a" style="left:567.8px;top:257px;width:1px;height:4px;background:#80868b"></div>
<div class="a" style="left:581.0px;top:257px;width:1px;height:4px;background:#80868b"></div>
<div class="a" style="left:607.4px;top:257px;width:1px;height:4px;background:#80868b"></div>
<div class="a" style="left:620.6px;top:257px;width:1px;height:4px;background:#80868b"></div>
<div class="a" style="left:633.8px;top:257px;width:1px;height:4px;background:#80868b"></div>
<div class="a" style="left:647.0px;top:253px;width:1px;height:8px;background:#80868b"></div>
<div class="a" style="left:660.3px;top:257px;width:1px;height:4px;background:#80868b"></div>
<div class="a" style="left:673.5px;top:257px;width:1px;height:4px;background:#80868b"></div>
<div class="a" style="left:686.7px;top:257px;width:1px;height:4px;background:#80868b"></div>
<div class="a" style="left:713.1px;top:257px;width:1px;height:4px;background:#80868b"></div>
<div class="a" style="left:726.3px;top:257px;width:1px;height:4px;background:#80868b"></div>
<div class="a" style="left:739.5px;top:257px;width:1px;height:4px;background:#80868b"></div>
<div class="a" style="left:752.8px;top:253px;width:1px;height:8px;background:#80868b"></div>
<div class="a" style="left:766.0px;top:257px;width:1px;height:4px;background:#80868b"></div>
<div class="a" style="left:779.2px;top:257px;width:1px;height:4px;background:#80868b"></div>
<div class="a" style="left:792.4px;top:257px;width:1px;height:4px;background:#80868b"></div>
<div class="a" style="left:818.8px;top:257px;width:1px;height:4px;background:#80868b"></div>
<div class="a" style="left:832.0px;top:257px;width:1px;height:4px;background:#80868b"></div>
<div class="a" style="left:845.2px;top:257px;width:1px;height:4px;background:#80868b"></div>
<div class="a" style="left:858.5px;top:253px;width:1px;height:8px;background:#80868b"></div>
<div class="a" style="left:871.7px;top:257px;width:1px;height:4px;background:#80868b"></div>
<div class="a" style="left:884.9px;top:257px;width:1px;height:4px;background:#80868b"></div>
<div class="a" style="left:898.1px;top:257px;width:1px;height:4px;background:#80868b"></div>
<div class="a" style="left:924.5px;top:257px;width:1px;height:4px;background:#80868b"></div>
<div class="a" style="left:937.7px;top:257px;width:1px;height:4px;background:#80868b"></div>
<div class="a" style="left:950.9px;top:257px;width:1px;height:4px;background:#80868b"></div>
<div class="a" style="left:964.2px;top:253px;width:1px;height:8px;background:#80868b"></div>
<div class="a" style="left:977.4px;top:257px;width:1px;height:4px;background:#80868b"></div>
<div class="a" style="left:990.6px;top:257px;width:1px;height:4px;background:#80868b"></div>
<div class="a" style="left:1003.8px;top:257px;width:1px;height:4px;background:#80868b"></div>
<div class="a" style="left:1030.2px;top:257px;width:1px;height:4px;background:#80868b"></div>
<div class="a" style="left:1043.4px;top:257px;width:1px;height:4px;background:#80868b"></div>
<div class="a" style="left:1056.6px;top:257px;width:1px;height:4px;background:#80868b"></div>
<div class="a" style="left:1069.8px;top:253px;width:1px;height:8px;background:#80868b"></div>
<div class="a" style="left:1083.1px;top:257px;width:1px;height:4px;background:#80868b"></div>
<div class="a" style="left:1096.3px;top:257px;width:1px;height:4px;background:#80868b"></div>
<div class="a" style="left:1109.5px;top:257px;width:1px;height:4px;background:#80868b"></div>
<div class="a" style="left:1135.9px;top:257px;width:1px;height:4px;background:#80868b"></div>
<div class="a" style="left:1149.1px;top:257px;width:1px;height:4px;background:#80868b"></div>
<div class="a" style="left:1162.3px;top:257px;width:1px;height:4px;background:#80868b"></div>
<div class="a" style="left:1175.6px;top:253px;width:1px;height:8px;background:#80868b"></div>
<div class="a" style="left:1188.8px;top:257px;width:1px;height:4px;background:#80868b"></div>
<div class="a" style="left:1202.0px;top:257px;width:1px;height:4px;background:#80868b"></div>
<div class="a" style="left:1215.2px;top:257px;width:1px;height:4px;background:#80868b"></div>
<div class="a" style="left:1241.6px;top:257px;width:1px;height:4px;background:#80868b"></div>
<div class="a" style="left:1254.8px;top:257px;width:1px;height:4px;background:#80868b"></div>
<div class="a" style="left:1268.0px;top:257px;width:1px;height:4px;background:#80868b"></div>
<div class="a" style="left:1281.2px;top:253px;width:1px;height:8px;background:#80868b"></div>
<div class="a" style="left:1294.5px;top:257px;width:1px;height:4px;background:#80868b"></div>
<div class="a" style="left:1307.7px;top:257px;width:1px;height:4px;background:#80868b"></div>
<div class="a" style="left:1320.9px;top:257px;width:1px;height:4px;background:#80868b"></div>
<div class="a" style="left:1347.3px;top:257px;width:1px;height:4px;background:#80868b"></div>
<div class="a" style="left:1360.5px;top:257px;width:1px;height:4px;background:#80868b"></div>
<div class="a" style="left:1373.7px;top:257px;width:1px;height:4px;background:#80868b"></div>
<div class="a" style="left:1387.0px;top:253px;width:1px;height:8px;background:#80868b"></div>
<div class="a" style="left:1387px;top:253px;width:1px;height:9px;background:#80868b"></div>
<div class="a" style="left:488.5px;top:257px;width:1px;height:4px;background:#80868b"></div>
<div class="a" style="left:699.9px;top:257px;width:1px;height:4px;background:#80868b"></div>
<div class="a" style="left:805.6px;top:257px;width:1px;height:4px;background:#80868b"></div>
<div class="a" style="left:911.3px;top:257px;width:1px;height:4px;background:#80868b"></div>
<div class="a" style="left:1017.0px;top:257px;width:1px;height:4px;background:#80868b"></div>
<div class="a" style="left:1122.7px;top:257px;width:1px;height:4px;background:#80868b"></div>
<div class="a" style="left:1228.4px;top:257px;width:1px;height:4px;background:#80868b"></div>
<div class="a" style="left:1334.1px;top:257px;width:1px;height:4px;background:#80868b"></div>
<div class="t" style="left:485px;top:245px;width:8px;text-align:center;font-size:11.5px;color:#444746">1</div>
<div class="t" style="left:696px;top:245px;width:8px;text-align:center;font-size:11.5px;color:#444746">1</div>
<div class="t" style="left:802px;top:245px;width:8px;text-align:center;font-size:11.5px;color:#444746">2</div>
<div class="t" style="left:907px;top:245px;width:8px;text-align:center;font-size:11.5px;color:#444746">3</div>
<div class="t" style="left:1013px;top:245px;width:8px;text-align:center;font-size:11.5px;color:#444746">4</div>
<div class="t" style="left:1119px;top:245px;width:8px;text-align:center;font-size:11.5px;color:#444746">5</div>
<div class="t" style="left:1225px;top:245px;width:8px;text-align:center;font-size:11.5px;color:#444746">6</div>
<div class="t" style="left:1330px;top:245px;width:8px;text-align:center;font-size:11.5px;color:#444746">7</div>
<div class="a" style="left:615px;top:248px;width:13px;height:4px;background:#4285f4"></div>
<svg style="left:642px;top:253px" width="12" height="7"><path d="M0 0H12L6 7z" fill="#4285f4"/></svg>
<svg style="left:1275px;top:253px" width="12" height="7"><path d="M0 0H12L6 7z" fill="#4285f4"/></svg>
<div class="a" style="left:17px;top:262px;width:1px;height:770px;background:#c9cccf"></div>
<div class="a" style="left:17px;top:303px;width:1px;height:729px;background:#747775"></div>
<div class="a" style="left:12px;top:302.8px;width:4px;height:1px;background:#80868b"></div>
<div class="a" style="left:12px;top:263.2px;width:4px;height:1px;background:#80868b"></div>
<div class="a" style="left:12px;top:276.4px;width:4px;height:1px;background:#80868b"></div>
<div class="a" style="left:12px;top:289.6px;width:4px;height:1px;background:#80868b"></div>
<div class="a" style="left:12px;top:316.0px;width:4px;height:1px;background:#80868b"></div>
<div class="a" style="left:12px;top:329.2px;width:4px;height:1px;background:#80868b"></div>
<div class="a" style="left:12px;top:342.4px;width:4px;height:1px;background:#80868b"></div>
<div class="a" style="left:8px;top:355.6px;width:8px;height:1px;background:#80868b"></div>
<div class="a" style="left:12px;top:368.9px;width:4px;height:1px;background:#80868b"></div>
<div class="a" style="left:12px;top:382.1px;width:4px;height:1px;background:#80868b"></div>
<div class="a" style="left:12px;top:395.3px;width:4px;height:1px;background:#80868b"></div>
<div class="a" style="left:12px;top:421.7px;width:4px;height:1px;background:#80868b"></div>
<div class="a" style="left:12px;top:434.9px;width:4px;height:1px;background:#80868b"></div>
<div class="a" style="left:12px;top:448.1px;width:4px;height:1px;background:#80868b"></div>
<div class="a" style="left:8px;top:461.4px;width:8px;height:1px;background:#80868b"></div>
<div class="a" style="left:12px;top:474.6px;width:4px;height:1px;background:#80868b"></div>
<div class="a" style="left:12px;top:487.8px;width:4px;height:1px;background:#80868b"></div>
<div class="a" style="left:12px;top:501.0px;width:4px;height:1px;background:#80868b"></div>
<div class="a" style="left:12px;top:527.4px;width:4px;height:1px;background:#80868b"></div>
<div class="a" style="left:12px;top:540.6px;width:4px;height:1px;background:#80868b"></div>
<div class="a" style="left:12px;top:553.8px;width:4px;height:1px;background:#80868b"></div>
<div class="a" style="left:8px;top:567.1px;width:8px;height:1px;background:#80868b"></div>
<div class="a" style="left:12px;top:580.3px;width:4px;height:1px;background:#80868b"></div>
<div class="a" style="left:12px;top:593.5px;width:4px;height:1px;background:#80868b"></div>
<div class="a" style="left:12px;top:606.7px;width:4px;height:1px;background:#80868b"></div>
<div class="a" style="left:12px;top:633.1px;width:4px;height:1px;background:#80868b"></div>
<div class="a" style="left:12px;top:646.3px;width:4px;height:1px;background:#80868b"></div>
<div class="a" style="left:12px;top:659.5px;width:4px;height:1px;background:#80868b"></div>
<div class="a" style="left:8px;top:672.8px;width:8px;height:1px;background:#80868b"></div>
<div class="a" style="left:12px;top:686.0px;width:4px;height:1px;background:#80868b"></div>
<div class="a" style="left:12px;top:699.2px;width:4px;height:1px;background:#80868b"></div>
<div class="a" style="left:12px;top:712.4px;width:4px;height:1px;background:#80868b"></div>
<div class="a" style="left:12px;top:738.8px;width:4px;height:1px;background:#80868b"></div>
<div class="a" style="left:12px;top:752.0px;width:4px;height:1px;background:#80868b"></div>
<div class="a" style="left:12px;top:765.2px;width:4px;height:1px;background:#80868b"></div>
<div class="a" style="left:8px;top:778.4px;width:8px;height:1px;background:#80868b"></div>
<div class="a" style="left:12px;top:791.7px;width:4px;height:1px;background:#80868b"></div>
<div class="a" style="left:12px;top:804.9px;width:4px;height:1px;background:#80868b"></div>
<div class="a" style="left:12px;top:818.1px;width:4px;height:1px;background:#80868b"></div>
<div class="a" style="left:12px;top:844.5px;width:4px;height:1px;background:#80868b"></div>
<div class="a" style="left:12px;top:857.7px;width:4px;height:1px;background:#80868b"></div>
<div class="a" style="left:12px;top:870.9px;width:4px;height:1px;background:#80868b"></div>
<div class="a" style="left:8px;top:884.2px;width:8px;height:1px;background:#80868b"></div>
<div class="a" style="left:12px;top:897.4px;width:4px;height:1px;background:#80868b"></div>
<div class="a" style="left:12px;top:910.6px;width:4px;height:1px;background:#80868b"></div>
<div class="a" style="left:12px;top:923.8px;width:4px;height:1px;background:#80868b"></div>
<div class="a" style="left:12px;top:950.2px;width:4px;height:1px;background:#80868b"></div>
<div class="a" style="left:12px;top:963.4px;width:4px;height:1px;background:#80868b"></div>
<div class="a" style="left:12px;top:976.6px;width:4px;height:1px;background:#80868b"></div>
<div class="a" style="left:8px;top:989.8px;width:8px;height:1px;background:#80868b"></div>
<div class="a" style="left:12px;top:1003.1px;width:4px;height:1px;background:#80868b"></div>
<div class="a" style="left:12px;top:1016.3px;width:4px;height:1px;background:#80868b"></div>
<div class="a" style="left:12px;top:1029.5px;width:4px;height:1px;background:#80868b"></div>
<div class="t" style="left:0px;top:403.0px;width:12px;height:12px;line-height:12px;text-align:center;font-size:11.5px;color:#444746;transform:rotate(-90deg)">1</div>
<div class="a" style="left:12px;top:408.5px;width:4px;height:1px;background:#80868b"></div>
<div class="t" style="left:0px;top:508.7px;width:12px;height:12px;line-height:12px;text-align:center;font-size:11.5px;color:#444746;transform:rotate(-90deg)">2</div>
<div class="a" style="left:12px;top:514.2px;width:4px;height:1px;background:#80868b"></div>
<div class="t" style="left:0px;top:614.4px;width:12px;height:12px;line-height:12px;text-align:center;font-size:11.5px;color:#444746;transform:rotate(-90deg)">3</div>
<div class="a" style="left:12px;top:619.9px;width:4px;height:1px;background:#80868b"></div>
<div class="t" style="left:0px;top:720.1px;width:12px;height:12px;line-height:12px;text-align:center;font-size:11.5px;color:#444746;transform:rotate(-90deg)">4</div>
<div class="a" style="left:12px;top:725.6px;width:4px;height:1px;background:#80868b"></div>
<div class="t" style="left:0px;top:825.8px;width:12px;height:12px;line-height:12px;text-align:center;font-size:11.5px;color:#444746;transform:rotate(-90deg)">5</div>
<div class="a" style="left:12px;top:831.3px;width:4px;height:1px;background:#80868b"></div>
<div class="t" style="left:0px;top:931.5px;width:12px;height:12px;line-height:12px;text-align:center;font-size:11.5px;color:#444746;transform:rotate(-90deg)">6</div>
<div class="a" style="left:12px;top:937.0px;width:4px;height:1px;background:#80868b"></div>
<div class="a" style="left:489px;top:263px;width:900px;height:769px;background:#fff;border-left:1px solid #c6c8ca;border-right:1px solid #c6c8ca"></div>
<svg style="left:44px;top:284px" width="20" height="18" viewBox="0 0 20 18"><path d="M19 9H2.5M9.5 1.5L2 9l7.5 7.5" stroke="#444746" stroke-width="2" fill="none"/></svg>
<div class="t" style="left:49px;top:343px;font-size:14.7px;color:#1f1f1f;-webkit-text-stroke:.2px #1f1f1f;transform:scaleX(1.117);transform-origin:0 0;font-weight:normal">Document tabs</div>
<svg style="left:273px;top:345px" width="11" height="11"><path d="M5.5 0V11M0 5.5H11" stroke="#444746" stroke-width="1.6"/></svg>
<div class="a" style="left:35px;top:377px;width:274px;height:1px;background:#c7c7c7"></div>
<div class="a" style="left:65px;top:378px;width:2px;height:630px;background:#dadce0"></div>
<div class="t side" style="left:115.6px;top:397.7px;color:#444746;transform:scaleX(1.115)">Cadence</div>
<div class="t side" style="left:115.6px;top:437.3px;color:#444746;transform:scaleX(1.138)">Grace-period logic (4...</div>
<div class="t side" style="left:115.6px;top:476.9px;color:#444746;transform:scaleX(1.118)">Automation Design</div>
<div class="t side" style="left:101.9px;top:516.5px;color:#444746;transform:scaleX(1.082)">6.3 Stage Transitions (Y...</div>
<div class="t side" style="left:115.6px;top:556.1px;color:#355fc2;transform:scaleX(1.132)">Data &amp; Logic</div>
<div class="t side" style="left:115.6px;top:595.7px;color:#444746;transform:scaleX(1.142)">Batch Job (nightly)</div>
<div class="t side" style="left:115.6px;top:635.3px;color:#444746;transform:scaleX(1.173)">Notifications</div>
<div class="t side" style="left:101.9px;top:674.9px;color:#444746;transform:scaleX(1.078)">6.4 Economic Relief (Re...</div>
<div class="t side" style="left:115.6px;top:714.5px;color:#444746;transform:scaleX(1.151)">Creation</div>
<div class="t side" style="left:115.6px;top:754.1px;color:#444746;transform:scaleX(1.129)">Decision</div>
<div class="t side" style="left:101.9px;top:793.7px;color:#444746;transform:scaleX(1.118)">6.6 Arrears Follow-up (...</div>
<div class="t side" style="left:115.6px;top:833.3px;color:#444746;transform:scaleX(1.115)">Cadence</div>
<div class="t side" style="left:115.6px;top:872.9px;color:#444746;transform:scaleX(1.102)">Sensitivity Rules</div>
<div class="t side" style="left:101.9px;top:912.5px;color:#444746;transform:scaleX(1.073)">6.7 Email Template Inve...</div>
<div class="t side" style="left:101.9px;top:952.1px;color:#444746;transform:scaleX(1.11)">6.8 Orchestration: How ...</div>
<div class="t side" style="left:101.9px;top:991.7px;color:#444746;transform:scaleX(1.112)">6.9 Tech Notes (Object...</div>
<div class="a" style="left:65px;top:554px;width:2px;height:18px;background:#1f3f94"></div>
<div class="a" style="left:774px;top:427px;width:174px;height:36px;background:#d9d9d9"></div>
<div class="t doc" style="left:596px;top:306.42px;font-size:25.05px;font-weight:bold">6.3 Stage Transitions (Youth <span style="display:inline-block;width:1em;height:0;position:relative"><svg style="left:1.00px;bottom:0.67px" width="23.28" height="11.85"><path d="M0 5.92H22.47M17.28 1.67L22.61 5.92L17.28 10.18" stroke="#000" stroke-width="1.35" fill="none"/></svg></span> Adult <span style="display:inline-block;width:1em;height:0;position:relative"><svg style="left:1.00px;bottom:0.67px" width="23.28" height="11.85"><path d="M0 5.92H22.47M17.28 1.67L22.61 5.92L17.28 10.18" stroke="#000" stroke-width="1.35" fill="none"/></svg></span> Senior)</div>
<div class="t doc" style="left:597px;top:354.75px;font-size:16.13px"><b>Trigger:</b> Birthday thresholds (18<span style="display:inline-block;width:1em;height:0;position:relative"><svg style="left:0.81px;bottom:-1.35px" width="14.52" height="8.70"><path d="M0 4.35H13.86M10.32 1.55L13.97 4.35L10.32 7.15" stroke="#000" stroke-width="1.1" fill="none"/></svg></span>youth,26 <span style="display:inline-block;width:1em;height:0;position:relative"><svg style="left:0.81px;bottom:-1.35px" width="14.52" height="8.70"><path d="M0 4.35H13.86M10.32 1.55L13.97 4.35L10.32 7.15" stroke="#000" stroke-width="1.1" fill="none"/></svg></span> Adult, 65 <span style="display:inline-block;width:1em;height:0;position:relative"><svg style="left:0.81px;bottom:-1.35px" width="14.52" height="8.70"><path d="M0 4.35H13.86M10.32 1.55L13.97 4.35L10.32 7.15" stroke="#000" stroke-width="1.1" fill="none"/></svg></span> Senior).</div>
<div class="t doc" style="left:622px;top:398.46px;font-size:19.07px;font-weight:bold">Data &amp; Logic</div>
<div class="a" style="left:623px;top:447.7px;width:7.6px;height:7.6px;border-radius:50%;background:#000"></div>
<div class="t doc" style="left:649px;top:441.95px;font-size:16.13px"><span class="code">Age__c</span> formula; <span class="code">Needs_Stage_Update__c</span> (boolean) = TRUE when age crosses</div>
<div class="t doc" style="left:649px;top:465.95px;font-size:16.13px">threshold AND <span class="code">Membership_Stage__c</span> is updated.</div>
<div class="t doc" style="left:622px;top:531.96px;font-size:19.07px;font-weight:bold">Batch Job (nightly)</div>
<div class="a" style="left:623px;top:580.5px;width:7.6px;height:7.6px;border-radius:50%;background:#000"></div>
<div class="t doc" style="left:649px;top:575.05px;font-size:16.13px">Find People with <span class="code">Needs_Stage_Update__c = TRUE</span>.</div>
<div class="a" style="left:623px;top:626.2px;width:7.6px;height:7.6px;border-radius:50%;background:#000"></div>
<div class="t doc" style="left:649px;top:620.65px;font-size:16.13px">Update <span class="code">Membership_Stage__c</span>.</div>
<div class="a" style="left:623px;top:669.8px;width:7.6px;height:7.6px;border-radius:50%;background:#000"></div>
<div class="t doc" style="left:649px;top:664.95px;font-size:16.13px">Create <b>PersonLifeEvent</b> with Event_Type = “Age Milestone”.</div>
<svg style="left:648px;top:679.5px" width="180" height="5"><path d="M0 2.5 L2 1.3 L4 3.7 L6 1.3 L8 3.7 L10 1.3 L12 3.7 L14 1.3 L16 3.7 L18 1.3 L20 3.7 L22 1.3 L24 3.7 L26 1.3 L28 3.7 L30 1.3 L32 3.7 L34 1.3 L36 3.7 L38 1.3 L40 3.7 L42 1.3 L44 3.7 L46 1.3 L48 3.7 L50 1.3 L52 3.7 L54 1.3 L56 3.7 L58 1.3 L60 3.7 L62 1.3 L64 3.7 L66 1.3 L68 3.7 L70 1.3 L72 3.7 L74 1.3 L76 3.7 L78 1.3 L80 3.7 L82 1.3 L84 3.7 L86 1.3 L88 3.7 L90 1.3 L92 3.7 L94 1.3 L96 3.7 L98 1.3 L100 3.7 L102 1.3 L104 3.7 L106 1.3 L108 3.7 L110 1.3 L112 3.7 L114 1.3 L116 3.7 L118 1.3 L120 3.7 L122 1.3 L124 3.7 L126 1.3 L128 3.7 L130 1.3 L132 3.7 L134 1.3 L136 3.7 L138 1.3 L140 3.7 L142 1.3 L144 3.7 L146 1.3 L148 3.7 L150 1.3 L152 3.7 L154 1.3 L156 3.7 L158 1.3 L160 3.7 L162 1.3 L164 3.7 L166 1.3 L168 3.7 L170 1.3 L172 3.7 L174 1.3 L176 3.7 L178 1.3 L180 3.7" stroke="#4f74d0" stroke-width="1" fill="none"/></svg>
<div class="a" style="left:623px;top:713.5px;width:7.6px;height:7.6px;border-radius:50%;background:#000"></div>
<div class="t doc" style="left:649px;top:708.05px;font-size:16.13px">Optional: create/update <b>Membership_Payment__c</b> template for the <b>next</b> Hijri year with</div>
<div class="t doc" style="left:649px;top:728.75px;font-size:16.13px">correct tier pricing.</div>
<div class="t doc" style="left:622px;top:793.16px;font-size:19.07px;font-weight:bold">Notifications</div>
<div class="a" style="left:623px;top:840.5px;width:7.6px;height:7.6px;border-radius:50%;background:#000"></div>
<div class="t doc" style="left:649px;top:834.65px;font-size:16.13px"><b>Member email (informational):</b> “Your membership stage is now {{NewStage}}”</div>
<div class="t doc" style="left:649px;top:856.15px;font-size:16.13px">(explains fee difference next cycle).</div>
<div class="a" style="left:626px;top:928px;width:652px;height:1px;background:#888"></div>
<div class="a" style="left:1367px;top:362px;width:44px;height:185px;border-radius:22px;background:#f6fbfb;box-shadow:0 1px 3px rgba(0,0,0,.3),0 2px 6px 1px rgba(0,0,0,.12)"></div>
<svg style="left:1379px;top:376px" width="25" height="25" viewBox="0 0 25 25"><path d="M3 22.8V18.3L17.6 3.9Q19.2 2.5 20.8 3.9L22.2 5.3Q23.6 6.9 22.2 8.4L7.7 22.8z" fill="#3366cc"/><path d="M5 21.1V19.5L15.7 8.9 17.2 10.3 7.5 21.1z" fill="#f6fbfb"/><path d="M5.5 1.7Q6.2 5.9 10.2 6.9 6.2 7.9 5.5 12 4.8 7.9.8 6.9 4.8 5.9 5.5 1.7z" fill="#3366cc"/></svg>
<svg style="left:1379px;top:422px" width="22" height="22" viewBox="0 0 22 22"><path d="M1 20.5V2.5A1.5 1.5 0 0 1 2.5 1H19.5A1.5 1.5 0 0 1 21 2.5V15A1.5 1.5 0 0 1 19.5 16.5H5z" stroke="#3366cc" stroke-width="2" fill="none" stroke-linejoin="round"/><path d="M11 4.5V13M6.8 8.8H15.2" stroke="#3366cc" stroke-width="2"/></svg>
<svg style="left:1379px;top:466px" width="23" height="23" viewBox="0 0 23 23"><circle cx="11.5" cy="11.5" r="10" stroke="#3366cc" stroke-width="2" fill="none"/><circle cx="7.8" cy="9" r="1.6" fill="#3366cc"/><circle cx="15.2" cy="9" r="1.6" fill="#3366cc"/><path d="M6.5 13.2H16.5A5 5 0 0 1 6.5 13.2z" fill="#3366cc"/></svg>
<svg style="left:1379px;top:509px" width="24" height="24" viewBox="0 0 24 24"><path d="M1.8 21.6V2.6A1.5 1.5 0 0 1 3.3 1.1H20.9A1.5 1.5 0 0 1 22.4 2.6V16.9A1.5 1.5 0 0 1 20.9 18.4H5z" stroke="#3366cc" stroke-width="2" fill="none" stroke-linejoin="round"/><path d="M5 13.9V11.6L11.6 5 13.9 7.3 7.3 13.9z" fill="#3366cc"/><path d="M11.2 12.9H18.3" stroke="#3366cc" stroke-width="1.9"/></svg>
<div class="a" style="left:1907px;top:527px;width:9px;height:48px;border-radius:4.5px;background:#dadde0"></div>
<div class="a" style="left:1894px;top:979px;width:44px;height:44px;border-radius:22px;background:#fff;box-shadow:0 1px 3px rgba(0,0,0,.3),0 1px 4px 1px rgba(0,0,0,.1)"></div>
<svg style="left:1905px;top:996px" width="8" height="11"><path d="M7 .8L2 5.5 7 10.2" stroke="#444746" stroke-width="1.8" fill="none"/></svg>
<div class="a" style="left:0;top:1031px;width:1920px;height:1px;background:#fff"></div>
<div id="taskbar" class="a"></div>
<div class="a" style="left:21px;top:1045px;width:20px;height:20px;border-radius:50%;background:linear-gradient(135deg,#ffd400 10%,#ff9a00 60%,#f05a00 100%)"></div>
<div class="t" style="left:50px;top:1042.5px;font-size:11.5px;color:#fff;font-weight:bold;transform:scaleX(.95);transform-origin:0 0">80°F</div>
<div class="t" style="left:50px;top:1058px;font-size:12px;color:#d6d6d6;transform:scaleX(1.0);transform-origin:0 0">Sunny</div>
<svg style="left:485px;top:1045px" width="23" height="23"><defs><linearGradient id="wg" gradientUnits="userSpaceOnUse" x1="0" y1="0" x2="23" y2="23"><stop offset="0" stop-color="#7fd6fb"/><stop offset=".5" stop-color="#3cc4fb"/><stop offset="1" stop-color="#1296f5"/></linearGradient></defs><rect x="0" y="0" width="11" height="11" rx=".8" fill="url(#wg)"/><rect x="12" y="0" width="11" height="11" rx=".8" fill="url(#wg)"/><rect x="0" y="12" width="11" height="11" rx=".8" fill="url(#wg)"/><rect x="12" y="12" width="11" height="11" rx=".8" fill="url(#wg)"/></svg>
<div class="a" style="left:521px;top:1040px;width:220px;height:32px;border-radius:16px;background:#3b3b3b;border:1px solid #474747"></div>
<svg style="left:532px;top:1048.5px" width="16" height="17"><circle cx="6.8" cy="6.8" r="5.6" stroke="#d8d8d8" stroke-width="1.7" fill="#555"/><path d="M10.8 10.8L15 15.3" stroke="#d8d8d8" stroke-width="1.8"/></svg>
<div class="t" style="left:558px;top:1049px;font-size:14px;color:#cfcfcf;transform:scaleX(.92);transform-origin:0 0">Search</div>
<svg style="left:690px;top:1042px" width="45" height="28" viewBox="0 0 45 28"><circle cx="21" cy="11" r="11" fill="#f5c55a"/><circle cx="16" cy="8" r="2" fill="#e2a43c"/><circle cx="25" cy="15" r="1.6" fill="#e2a43c"/><path d="M0 24L4 16 7 20 9 14 12 22 30 22 34 14 37 20 40 15 44 24z" fill="#3a56c8"/><path d="M1 25Q22 17 44 23Q30 28 1 26z" fill="#d8dcef"/></svg>
<div class="a" style="left:753px;top:1049px;width:18px;height:17px;border-radius:2px;background:#6e6e6e"></div><div class="a" style="left:759px;top:1044px;width:18px;height:16px;border-radius:2px;background:#f0f0f0"></div><div class="a" style="left:759px;top:1049px;width:12px;height:11px;background:#a9a9a9"></div>
<svg style="left:796px;top:1045px" width="24" height="22" viewBox="0 0 24 22"><path d="M12 0A11 10.5 0 1 1 5 18.5L1 22 2.5 16A11 10.5 0 0 1 12 0z" fill="#7b6ee0"/><rect x="6" y="6.5" width="9" height="8" rx="1.5" fill="#fff"/><path d="M15 10.5L19 7.5V13.5z" fill="#fff"/></svg>
<svg style="left:841px;top:1045px" width="24" height="22" viewBox="0 0 24 22"><path d="M0 2A1.5 1.5 0 0 1 1.5 .5H8L10 3H22.5A1.5 1.5 0 0 1 24 4.5V22H0z" fill="#e8a92a"/><rect x="0" y="4" width="24" height="18" rx="1" fill="#fcd457"/><rect x="5" y="15" width="14" height="7" rx="1" fill="#1e88e5"/></svg>
<div class="a" style="left:850px;top:1072px;width:6px;height:3px;border-radius:2px;background:#9a9a9a"></div>
<svg style="left:885px;top:1044px" width="24" height="24" viewBox="0 0 24 24"><defs><linearGradient id="eg" x1="0" y1="0" x2="1" y2="1"><stop offset="0" stop-color="#36c6a0"/><stop offset=".5" stop-color="#1ba1e2"/><stop offset="1" stop-color="#0c59a4"/></linearGradient></defs><circle cx="12" cy="12" r="12" fill="url(#eg)"/><path d="M6 15C6 10 11 8 14 9.5 17 11 16 14 13 14H9C10 18 15 19 19 17 17 21 12 22 9 20 6 18.5 6 16.5 6 15z" fill="#1f1f1f" opacity=".55"/></svg>
<svg style="left:929px;top:1043px" width="24" height="25" viewBox="0 0 24 25"><defs><radialGradient id="fg" cx=".6" cy=".3" r=".8"><stop offset="0" stop-color="#ffd500"/><stop offset=".5" stop-color="#ff7139"/><stop offset="1" stop-color="#e31587"/></radialGradient></defs><circle cx="12" cy="13.5" r="11" fill="url(#fg)"/><circle cx="12.5" cy="13" r="5.5" fill="#7542e5"/><path d="M14 0C18 3 22 7 23 11 22 7 18 4 14 3z" fill="#ffbd4f"/></svg>
<svg style="left:973px;top:1044px" width="24" height="24" viewBox="0 0 24 24"><circle cx="12" cy="12" r="12" fill="#34a853"/><path d="M12 0A12 12 0 0 1 22.4 6H12A6 6 0 0 0 6.8 9L1.6 6A12 12 0 0 1 12 0z" fill="#ea4335"/><path d="M22.4 6A12 12 0 0 1 12 24L17.2 15A6 6 0 0 0 12 6z" fill="#fbbc04"/><path d="M1.6 6L6.8 15A6 6 0 0 0 17.2 15L12 24A12 12 0 0 1 1.6 6z" fill="#34a853"/><circle cx="12" cy="12" r="5.4" fill="#fff"/><circle cx="12" cy="12" r="4.3" fill="#1a73e8"/></svg>
<svg style="left:987px;top:1039px" width="15" height="15" viewBox="0 0 15 15"><circle cx="7.5" cy="7.5" r="7.5" fill="#e9e9e9"/><ellipse cx="7.5" cy="8" rx="3.2" ry="4.4" fill="#8a5e45"/><path d="M4.3 6Q4.5 2 7.5 2 10.5 2 10.7 6 9.5 4 7.5 4 5.5 4 4.3 6z" fill="#1e1714"/><path d="M4.6 9Q5 12.5 7.5 12.6 10 12.5 10.4 9 9.5 11 7.5 11 5.5 11 4.6 9z" fill="#2a1d17"/><path d="M3 15Q4 12 7.5 12.5 11 12 12 15z" fill="#f4f4f4"/></svg>
<div class="a" style="left:982px;top:1072px;width:6px;height:3px;border-radius:2px;background:#9a9a9a"></div>
<svg style="left:1017px;top:1044px" width="24" height="24" viewBox="0 0 24 24"><circle cx="12" cy="12" r="12" fill="#34a853"/><path d="M12 0A12 12 0 0 1 22.4 6H12A6 6 0 0 0 6.8 9L1.6 6A12 12 0 0 1 12 0z" fill="#ea4335"/><path d="M22.4 6A12 12 0 0 1 12 24L17.2 15A6 6 0 0 0 12 6z" fill="#fbbc04"/><path d="M1.6 6L6.8 15A6 6 0 0 0 17.2 15L12 24A12 12 0 0 1 1.6 6z" fill="#34a853"/><circle cx="12" cy="12" r="5.4" fill="#fff"/><circle cx="12" cy="12" r="4.3" fill="#1a73e8"/></svg>
<div class="a" style="left:1030px;top:1042px;width:12px;height:12px;border-radius:3px;background:#2a2a2a;transform:rotate(20deg);border:1.5px solid #555"></div>
<div class="a" style="left:1053px;top:1036px;width:35px;height:40px;border-radius:5px;background:#2c2c2c;border:1px solid #333"></div>
<svg style="left:1061px;top:1044px" width="24" height="24" viewBox="0 0 24 24"><circle cx="12" cy="12" r="12" fill="#34a853"/><path d="M12 0A12 12 0 0 1 22.4 6H12A6 6 0 0 0 6.8 9L1.6 6A12 12 0 0 1 12 0z" fill="#ea4335"/><path d="M22.4 6A12 12 0 0 1 12 24L17.2 15A6 6 0 0 0 12 6z" fill="#fbbc04"/><path d="M1.6 6L6.8 15A6 6 0 0 0 17.2 15L12 24A12 12 0 0 1 1.6 6z" fill="#34a853"/><circle cx="12" cy="12" r="5.4" fill="#fff"/><circle cx="12" cy="12" r="4.3" fill="#1a73e8"/></svg>
<div class="a" style="left:1074px;top:1039px;width:16px;height:16px;border-radius:50%;background:#c7186a;color:#fff;font-size:10px;line-height:16px;text-align:center">S</div>
<div class="a" style="left:1065px;top:1072px;width:16px;height:3px;border-radius:2px;background:#4cc2ff"></div>
<svg style="left:1105px;top:1047px" width="24" height="18" viewBox="0 0 24 18"><rect x="0" y="0" width="24" height="18" fill="#cfe6f5"/><rect x="0" y="0" width="24" height="18" fill="none" stroke="#9cc" stroke-width=".8"/><path d="M1 15L5 13 7 5 9 12 12 10 14 13 17 4 19 12 23 14V17H1z" fill="#5aa6e0"/></svg>
<div class="a" style="left:1149px;top:1046px;width:23px;height:19px;background:#0c0c0c;border:1.5px solid #b8b8b8;border-top:3px solid #b8b8b8"></div><div class="t" style="left:1152px;top:1050px;font-size:6px;color:#ddd;font-family:'Liberation Mono',monospace">C:\_</div>
<svg style="left:1193px;top:1043px" width="24" height="25" viewBox="0 0 24 25"><path d="M12 1C6 1 2 3 2 8 2 13 5 18 7 20 8 21 9 20 9 18V15C10 16 14 16 15 15V21C15 24 18 24 19 22 20 20 18 17 19 15 21 12 22 9 22 7 22 3 18 1 12 1z" fill="#336791" stroke="#fff" stroke-width="1.2"/><path d="M8 5C9 8 9 11 10 13M16 5C15 8 15 11 14 13" stroke="#fff" stroke-width="1" fill="none"/></svg>
<svg style="left:1237px;top:1044px" width="24" height="24" viewBox="0 0 24 24"><path d="M17.5 0.5L24 3.5V20.5L17.5 23.5 7 13.5 2.5 17 0 15.5V8.5L2.5 7 7 10.5zM17.5 6.5L11 12 17.5 17.5z" fill="#1f9cf0"/><path d="M17.5 0.5L24 3.5V20.5L17.5 23.5z" fill="#0065a9"/></svg>
<div class="a" style="left:1246px;top:1072px;width:6px;height:3px;border-radius:2px;background:#9a9a9a"></div>
<svg style="left:1281px;top:1044px" width="24" height="24" viewBox="0 0 24 24"><defs><linearGradient id="pg" x1="0" y1="0" x2="1" y2="1"><stop offset="0" stop-color="#21d789"/><stop offset=".6" stop-color="#fcf84a"/><stop offset="1" stop-color="#07c3f2"/></linearGradient></defs><path d="M0 0H18L24 6V24H6L0 18z" fill="url(#pg)"/><rect x="4" y="4" width="16" height="16" fill="#000"/><text x="5.5" y="12.5" font-size="7.5" fill="#fff" font-family="Liberation Sans" font-weight="bold">PC</text><rect x="5.5" y="16" width="6" height="1.3" fill="#fff"/></svg>
<svg style="left:1325px;top:1044px" width="24" height="24" viewBox="0 0 24 24"><path d="M12 0L18 6 12 12 6 6z" fill="#f06b6b"/><path d="M18 6L24 12 18 18 12 12z" fill="#8dd36b"/><path d="M12 12L18 18 12 24 6 18z" fill="#f8d864"/><path d="M6 6L12 12 6 18 0 12z" fill="#6b9cf0"/><path d="M9 3L12 12 15 15M12 12V18" stroke="#222" stroke-width="1.5"/><circle cx="12" cy="12" r="1.8" fill="#222"/><circle cx="15" cy="15" r="1.8" fill="#222"/><circle cx="12" cy="18" r="1.8" fill="#222"/></svg>
<div class="a" style="left:1369px;top:1044px;width:24px;height:24px;background:#fff"></div><svg style="left:1373px;top:1046px" width="16" height="14" viewBox="0 0 16 14"><rect x="1" y="1" width="14" height="9" rx="1" fill="none" stroke="#3a7bbf" stroke-width="1.3"/><rect x="4" y="3.5" width="8" height="4" fill="#4caf50"/><path d="M8 10V12M5 12.5H11" stroke="#3a7bbf" stroke-width="1.2"/></svg><div class="t" style="left:1372px;top:1061px;font-size:4px;color:#444">TaskPro</div>
<div class="a" style="left:1378px;top:1072px;width:6px;height:3px;border-radius:2px;background:#9a9a9a"></div>
<svg style="left:1415px;top:1044px" width="21" height="24" viewBox="0 0 21 24"><path d="M2 0H15L21 6V22A2 2 0 0 1 19 24H2A2 2 0 0 1 0 22V2A2 2 0 0 1 2 0z" fill="#1e7ad6"/><path d="M15 0L21 6H15z" fill="#72c4f5"/><path d="M4 10H11M4 13H17M4 16H14" stroke="#fff" stroke-width="1.3"/><path d="M13 8H18V11H13z" fill="#fff" opacity=".7"/></svg>
<div class="a" style="left:1422px;top:1072px;width:6px;height:3px;border-radius:2px;background:#9a9a9a"></div>
<svg style="left:1671px;top:1052px" width="12" height="7"><path d="M1 6L6 1 11 6" stroke="#fff" stroke-width="1.4" fill="none"/></svg>
<svg style="left:1701px;top:1050px" width="17" height="12" viewBox="0 0 17 12"><path d="M4 12A4 4 0 0 1 3.5 4 5.5 5.5 0 0 1 13.5 5 3.5 3.5 0 0 1 13.5 12z" fill="#d0d0d0"/><path d="M4 12L10 6 13.5 12z" fill="#a8a8a8"/></svg>
<svg style="left:1733px;top:1050px" width="17" height="12" viewBox="0 0 17 12"><rect x=".7" y=".7" width="15.6" height="10.6" rx="1.5" fill="none" stroke="#fff" stroke-width="1.2"/><path d="M3 3.5H14M3 6H14M5 8.7H12" stroke="#fff" stroke-width="1.1" stroke-dasharray="1.2 .9"/></svg>
<svg style="left:1764px;top:1049px" width="17" height="13" viewBox="0 0 17 13"><path d="M1 4.5A10.5 10.5 0 0 1 16 4.5M3.5 7A7 7 0 0 1 13.5 7M6 9.5A3.5 3.5 0 0 1 11 9.5" stroke="#fff" stroke-width="1.4" fill="none"/><circle cx="8.5" cy="11.8" r="1.2" fill="#fff"/></svg>
<svg style="left:1788px;top:1049px" width="18" height="13" viewBox="0 0 18 13"><path d="M1 4.5H4L8 1V12L4 8.5H1z" stroke="#fff" stroke-width="1.2" fill="none" stroke-linejoin="round"/><path d="M10.5 4.5A3 3 0 0 1 10.5 8.5M12.5 2.8A5.5 5.5 0 0 1 12.5 10.2M14.5 1A8 8 0 0 1 14.5 12" stroke="#fff" stroke-width="1.2" fill="none"/></svg>
<div class="t" style="left:1822px;top:1042.5px;width:55px;text-align:right;font-size:12px;color:#fff;transform:scaleX(.97);transform-origin:100% 0">2:41 PM</div>
<div class="t" style="left:1822px;top:1058.5px;width:55px;text-align:right;font-size:12px;color:#fff;transform:scaleX(1.02);transform-origin:100% 0">12/4/2025</div>
<svg style="left:1885px;top:1048px" width="15" height="17" viewBox="0 0 15 17"><path d="M7.5 0A5 5 0 0 1 12.5 5V9.5L15 13H0L2.5 9.5V5A5 5 0 0 1 7.5 0z" fill="#99e6fc"/><path d="M5 14.5A2.5 2.5 0 0 0 10 14.5z" fill="#99e6fc"/></svg>
</body></html>
